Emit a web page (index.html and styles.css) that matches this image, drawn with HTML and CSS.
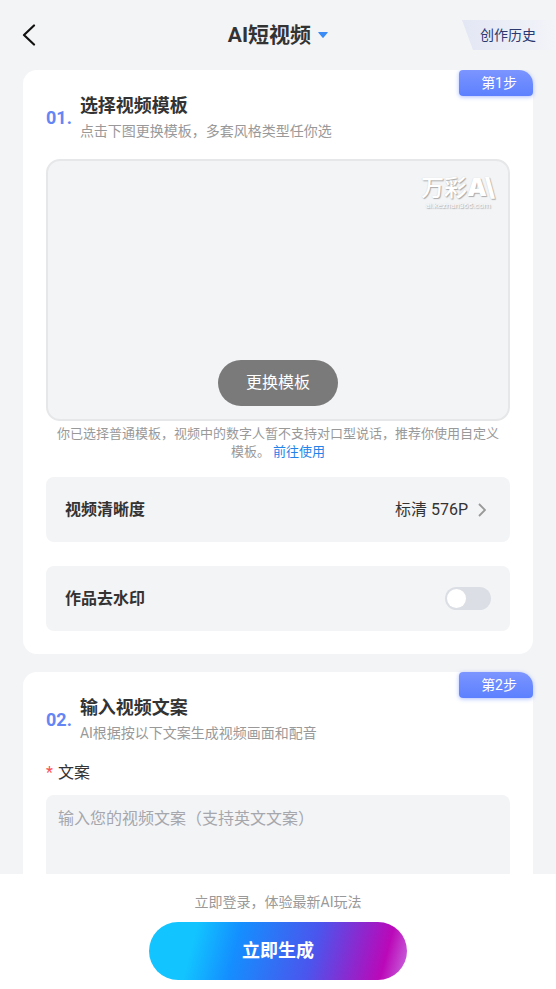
FILE: index.html
```html
<!DOCTYPE html>
<html lang="zh-CN">
<head>
<meta charset="utf-8">
<meta name="viewport" content="width=device-width, initial-scale=1">
<title>AI短视频</title>
<link rel="stylesheet" href="styles.css">
</head>
<body>
<header class="topbar">
  <button class="back" type="button" aria-label="返回">
    <svg width="14" height="22" viewBox="0 0 14 22" fill="none" stroke="#111" stroke-width="2.2" stroke-linecap="round" stroke-linejoin="round"><path d="M12 1.5 2 11l10 9.5"/></svg>
  </button>
  <h1 class="title">
    <button class="title-button" type="button">AI短视频
      <svg width="10" height="6" viewBox="0 0 10 6" fill="#3a8bf5"><path d="M.8 0h8.4q1 0 .4.8L5.6 5.6q-.6.6-1.2 0L.4.8Q-.2 0 .8 0z"/></svg>
    </button>
  </h1>
  <a class="history" href="#history">创作历史</a>
</header>

<main class="content">
  <section class="card">
    <span class="step">第1步</span>
    <div class="heading">
      <span class="number">01.</span>
      <div>
        <h2 class="heading-title">选择视频模板</h2>
        <p class="heading-note">点击下图更换模板，多套风格类型任你选</p>
      </div>
    </div>
    <div class="preview">
      <div class="watermark">
        <div class="watermark-name">万彩<b>A\</b></div>
        <div class="watermark-site">ai.kezhan365.com</div>
      </div>
      <button class="change" type="button">更换模板</button>
    </div>
    <p class="hint">你已选择普通模板，视频中的数字人暂不支持对口型说话，推荐你使用自定义模板。 <a href="#custom">前往使用</a></p>
    <button class="row" type="button">
      <span class="row-label">视频清晰度</span>
      <span class="row-value">标清 576P
        <svg width="8" height="14" viewBox="0 0 8 14" fill="none" stroke="#999" stroke-width="1.8"><path d="M1 1l6 6-6 6"/></svg>
      </span>
    </button>
    <label class="row">
      <span class="row-label">作品去水印</span>
      <input class="switch" type="checkbox" role="switch">
    </label>
  </section>

  <section class="card">
    <span class="step">第2步</span>
    <div class="heading">
      <span class="number">02.</span>
      <div>
        <h2 class="heading-title">输入视频文案</h2>
        <p class="heading-note">AI根据按以下文案生成视频画面和配音</p>
      </div>
    </div>
    <label class="field-label" for="copy"><span class="required">*</span>文案</label>
    <textarea class="copy" id="copy" placeholder="输入您的视频文案（支持英文文案）"></textarea>
  </section>
</main>

<footer class="actions">
  <p class="login-note">立即登录，体验最新AI玩法</p>
  <button class="generate" type="button">立即生成</button>
</footer>
</body>
</html>
```
FILE: styles.css
```css
* {
  box-sizing: border-box;
}

body {
  margin: 0;
  height: 100vh;
  display: flex;
  flex-direction: column;
  background: #f3f4f6;
  color: #333;
  font: 16px/24px Roboto, "Noto Sans CJK SC", sans-serif;
}

h1, h2, p {
  margin: 0;
}

button, textarea {
  font: inherit;
  color: inherit;
  border: 0;
  padding: 0;
  background: none;
}

a {
  color: #2483e8;
  text-decoration: none;
}

.topbar {
  flex: none;
  height: 70px;
  display: grid;
  grid-template-columns: 1fr auto 1fr;
  align-items: center;
}

.back {
  justify-self: start;
  display: flex;
  padding: 0 22px;
}

.title {
  font-size: 21px;
  line-height: 28px;
}

.title-button {
  display: flex;
  align-items: center;
  gap: 7px;
  font-weight: 700;
}

.history {
  justify-self: end;
  padding: 0 20px 0 18px;
  color: #2c3970;
  font-size: 14px;
  line-height: 30px;
  background: linear-gradient(90deg, #e3e7f4, #f3f4f9);
  clip-path: polygon(0 0, 100% 0, 100% 100%, 11px 100%);
}

.content {
  flex: 1;
  min-height: 0;
  overflow-y: auto;
  scrollbar-width: none;
  padding: 0 23px;
  display: flex;
  flex-direction: column;
  gap: 18px;
}

.card {
  flex: none;
  position: relative;
  display: flex;
  flex-direction: column;
  padding: 23px;
  border-radius: 14px;
  background: #fff;
}

.step {
  position: absolute;
  top: 0;
  right: 0;
  padding: 0 16px 0 22px;
  border-radius: 4px 14px 4px 4px;
  background: linear-gradient(#7c95ff, #5c80ff);
  box-shadow: 0 1px 4px #6385ff88;
  color: #fff;
  font-size: 14px;
  line-height: 26px;
}

.heading {
  display: flex;
  align-items: center;
  gap: 8px;
}

.number {
  color: #6585f5;
  font-size: 18px;
  font-weight: 700;
}

.heading-title {
  font-size: 18px;
  line-height: 26px;
}

.heading-note {
  color: #999;
  font-size: 14px;
  line-height: 24px;
}

.preview {
  height: 262px;
  margin-top: 16px;
  padding: 13px;
  display: flex;
  flex-direction: column;
  justify-content: space-between;
  border: 2px solid #e6e7e9;
  border-radius: 14px;
  background: #f3f4f6;
}

.watermark {
  align-self: flex-end;
  color: #fff;
  text-align: center;
  text-shadow: 1px 1px 1px #aaa, 0 0 1px #ccc;
}

.watermark-name {
  font-size: 23px;
  font-weight: 500;
  line-height: 26px;
}

.watermark-name b {
  font-family: Inter, sans-serif;
  font-size: 25px;
  font-weight: 900;
}

.watermark-site {
  font-size: 8px;
  line-height: 8px;
}

.change {
  align-self: center;
  padding: 11px 28px;
  border-radius: 23px;
  background: #7a7a7a;
  color: #fff;
}

.hint {
  margin-top: 4px;
  padding: 0 10px;
  color: #999;
  font-size: 13px;
  line-height: 18px;
  text-align: center;
}

.row {
  display: flex;
  align-items: center;
  justify-content: space-between;
  height: 65px;
  margin-top: 16px;
  padding: 0 19px;
  border-radius: 8px;
  background: #f3f4f6;
}

.row + .row {
  margin-top: 24px;
}

.row-label {
  font-weight: 700;
}

.row-value {
  display: flex;
  align-items: center;
  gap: 10px;
  padding-right: 5px;
}

.switch {
  appearance: none;
  width: 46px;
  height: 23px;
  margin: 0;
  padding: 2px;
  border-radius: 12px;
  background: #dcdee5;
}

.switch::before {
  content: "";
  display: block;
  width: 19px;
  height: 19px;
  border-radius: 50%;
  background: #fff;
}

.switch:checked {
  background: #5c80ff;
}

.switch:checked::before {
  margin-left: auto;
}

.field-label {
  margin-top: 16px;
  display: flex;
  gap: 5px;
}

.required {
  color: #fa5151;
}

.copy {
  height: 180px;
  margin-top: 10px;
  padding: 12px;
  border-radius: 8px;
  background: #f3f4f6;
  resize: none;
}

.copy::placeholder {
  color: #a5a7ad;
}

.actions {
  flex: none;
  display: flex;
  flex-direction: column;
  align-items: center;
  gap: 8px;
  padding: 16px 0 9px;
  background: #fff;
}

.login-note {
  color: #999;
  font-size: 14px;
}

.generate {
  min-width: 258px;
  height: 58px;
  border-radius: 29px;
  background: linear-gradient(105deg, #12c4ff 18%, #148fff 34%, #4b55ed 63%, #bb08b8 90%, #c65bd8 98%);
  color: #fff;
  font-size: 18px;
  font-weight: 700;
}
```
